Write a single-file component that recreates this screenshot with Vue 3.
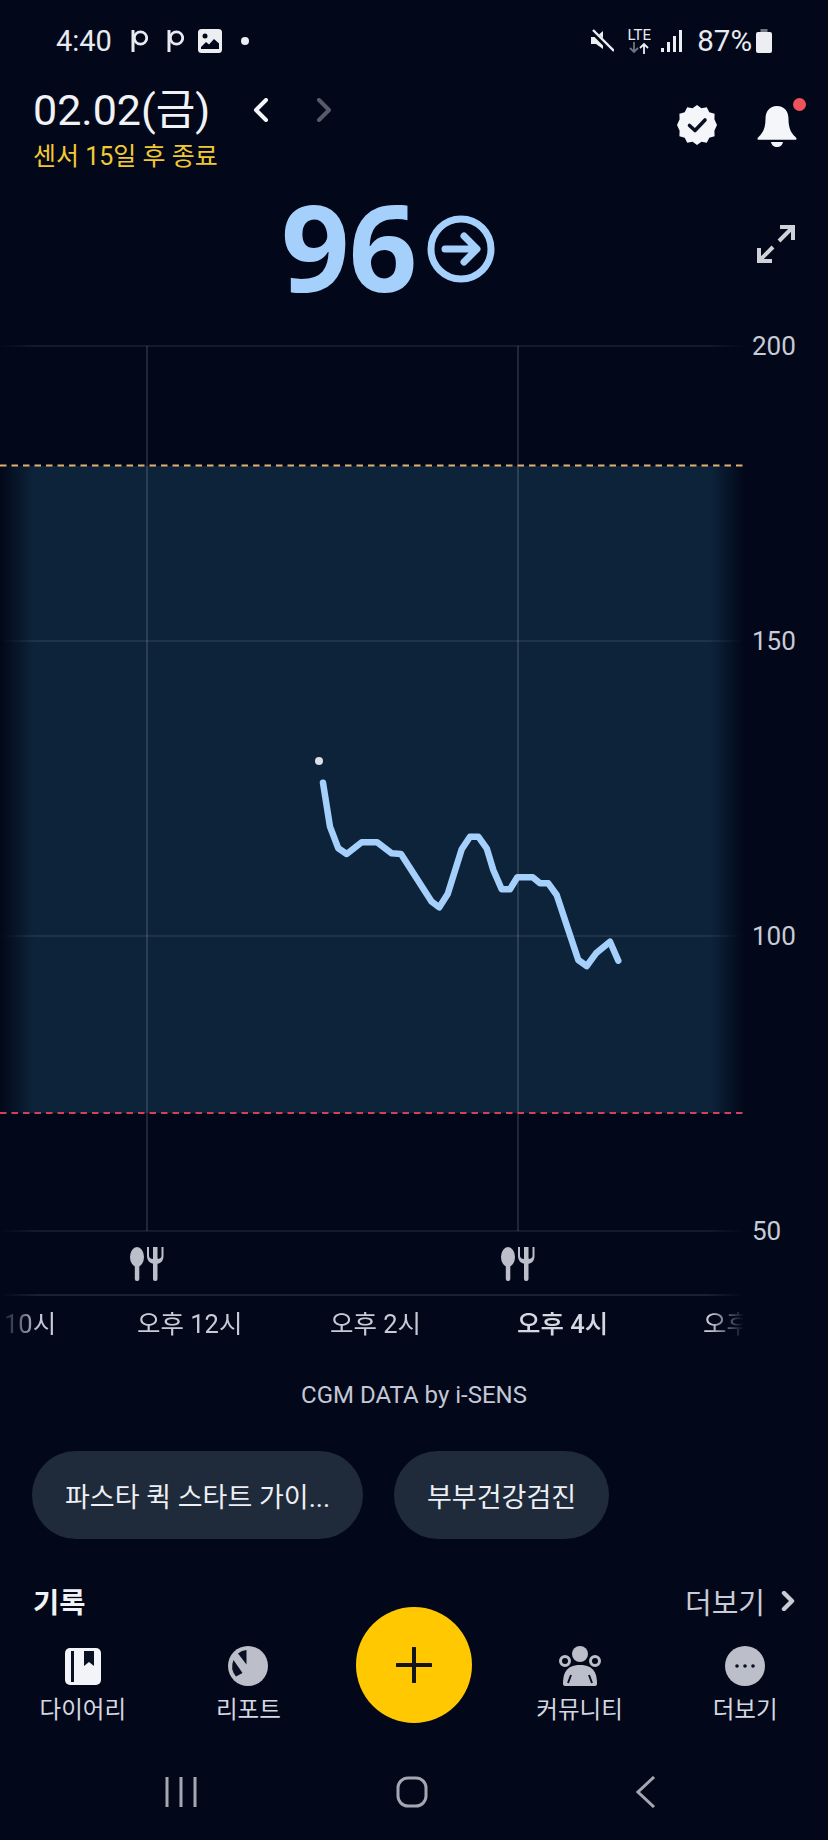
<script setup>
import { computed } from 'vue'

const gridLevels = [
  { label: '200', y: 346 },
  { label: '150', y: 641 },
  { label: '100', y: 936 },
  { label: '50', y: 1231 }
]

const hours = [
  { text: '10시', x: 4, cls: 'hour-dim' },
  { text: '오후 12시', x: 137, cls: '' },
  { text: '오후 2시', x: 330, cls: '' },
  { text: '오후 4시', x: 517, cls: 'hour-now' },
  { text: '오후', x: 703, cls: '' }
]

// traced from a 3x crop, so convert back afterwards
const rawPoints = [
  [99, 158], [120, 290], [145, 355], [170, 372], [215, 337], [262, 337], [305, 370], [333, 372],
  [425, 515], [448, 532], [473, 492], [515, 358], [540, 320], [565, 320], [590, 355], [610, 420],
  [635, 478], [660, 478], [682, 442], [728, 442], [750, 460], [775, 460], [800, 495], [835, 600],
  [865, 690], [890, 708], [918, 670], [960, 635], [985, 692]
]

const linePoints = computed(() =>
  rawPoints.map(([x, y]) => `${(290 + x / 3).toFixed(1)},${(730 + y / 3).toFixed(1)}`).join(' ')
)

const navItems = [
  { key: 'diary', label: '다이어리' },
  { key: 'report', label: '리포트' },
  { key: 'fab', label: '' },
  { key: 'community', label: '커뮤니티' },
  { key: 'more', label: '더보기' }
]
</script>

<template>
  <div class="page">
    <div class="status">
      <div class="status-left">
        <span class="clock">4:40</span>
        <svg class="ic-p" viewBox="0 0 18 24"><path d="M3 1v22" stroke="#e8eaf0" stroke-width="3" /><circle cx="10.500" cy="9" r="6.200" fill="none" stroke="#e8eaf0" stroke-width="2.800" /></svg>
        <svg class="ic-p" viewBox="0 0 18 24"><path d="M3 1v22" stroke="#e8eaf0" stroke-width="3" /><circle cx="10.500" cy="9" r="6.200" fill="none" stroke="#e8eaf0" stroke-width="2.800" /></svg>
        <svg class="ic-img" viewBox="0 0 24 24">
          <rect width="24" height="24" rx="3.500" fill="#eceef2" />
          <circle cx="7" cy="7" r="2.500" fill="#020819" />
          <path d="M3 20v-2l5-5 3 2.500 5-5.500 5 4.500V20z" fill="#020819" />
        </svg>
        <span class="dot"></span>
      </div>
      <div class="status-right">
        <svg class="ic-mute" viewBox="0 0 24 24">
          <path d="M1 8h5l7-6v18l-7-5H1z" fill="#eceef2" />
          <path d="M2 2l21 21" stroke="#020819" stroke-width="5" />
          <path d="M3 1l21 21" stroke="#eceef2" stroke-width="2.400" />
        </svg>
        <span class="lte">
          <span class="lte-text">LTE</span>
          <svg class="lte-arrows" viewBox="0 0 24 12">
            <path d="M7 0v10M3 6l4 4 4-4" fill="none" stroke="#6f7480" stroke-width="1.800" />
            <path d="M17 12V2M13 6l4-4 4 4" fill="none" stroke="#eceef2" stroke-width="1.800" />
          </svg>
        </span>
        <svg class="ic-signal" viewBox="0 0 22 24">
          <rect x="0" y="19" width="3" height="4" fill="#eceef2" />
          <rect x="6" y="13" width="3" height="10" fill="#eceef2" />
          <rect x="12" y="7" width="3" height="16" fill="#eceef2" />
          <rect x="18" y="1" width="3" height="22" fill="#eceef2" />
        </svg>
        <span class="battery-text">87%</span>
        <svg class="ic-battery" viewBox="0 0 16 24">
          <rect x="4.500" y="0" width="7" height="4" fill="#70747e" />
          <rect y="3" width="16" height="21" rx="2" fill="#eceef2" />
        </svg>
      </div>
    </div>

    <div class="head">
      <div class="head-left">
        <div class="date-row">
          <span class="date">02.02(금)</span>
          <svg class="chev chev-prev" viewBox="0 0 16 24"><path d="M13 2L3 12l10 10" fill="none" stroke="#f4f5f8" stroke-width="4" stroke-linecap="round" stroke-linejoin="round" /></svg>
          <svg class="chev chev-next" viewBox="0 0 16 24"><path d="M3 2l10 10L3 22" fill="none" stroke="#565b67" stroke-width="4" stroke-linecap="round" stroke-linejoin="round" /></svg>
        </div>
        <div class="sensor">센서 15일 후 종료</div>
      </div>
      <div class="head-right">
        <svg class="ic-badge" viewBox="0 0 40 40">
          <path d="M20 0l4.400 3.300 5.400-1 2.500 4.900 5.300 1.500-.2 5.500L40 20l-2.600 5.800.2 5.500-5.300 1.500-2.500 4.900-5.400-1L20 40l-4.400-3.300-5.400 1-2.500-4.900-5.300-1.500.2-5.500L0 20l2.600-5.800-.2-5.500 5.300-1.500 2.500-4.900 5.400 1z" fill="#f5f6f9" />
          <path d="M12.500 20.500l5.500 5 10-10.500" fill="none" stroke="#0a1024" stroke-width="3.600" stroke-linecap="round" stroke-linejoin="round" />
        </svg>
        <div class="bell-wrap">
          <svg class="ic-bell" viewBox="0 0 42 42">
            <path d="M21 1c-7.500 0-11.500 5.500-11.500 13 0 9-2.500 14-7 18-1.500 1.300-1.500 2.800.5 2.800h36c2 0 2-1.500.5-2.800-4.500-4-7-9-7-18C32.500 6.500 28.500 1 21 1z" fill="#f5f6f9" />
            <path d="M15 37h12c-.5 3-3 5-6 5s-5.500-2-6-5z" fill="#f5f6f9" />
          </svg>
          <span class="bell-dot"></span>
        </div>
      </div>
    </div>

    <div class="reading">
      <span class="value">96</span>
      <svg class="ic-trend" viewBox="0 0 68 68">
        <circle cx="34" cy="34" r="30" fill="none" stroke="#a5d0fb" stroke-width="7" />
        <path d="M18 34h31M37 21l13 13-13 13" fill="none" stroke="#a5d0fb" stroke-width="7" stroke-linecap="round" stroke-linejoin="round" />
      </svg>
      <svg class="ic-expand" viewBox="0 0 38 38">
        <path d="M22 16L36 2M23 2h13v13M16 22L2 36M2 23v13h13" fill="none" stroke="#d0d2da" stroke-width="4" />
      </svg>
    </div>

    <div class="chart">
      <svg class="plot" viewBox="0 320 744 980">
        <defs>
          <linearGradient id="band" x1="0" x2="1" y1="0" y2="0">
            <stop offset="0" stop-color="#0d233a" stop-opacity="0" />
            <stop offset="0.045" stop-color="#0d233a" />
            <stop offset="0.955" stop-color="#0d233a" />
            <stop offset="1" stop-color="#0d233a" stop-opacity="0" />
          </linearGradient>
          <linearGradient id="gridfade" x1="0" x2="744" y1="0" y2="0" gradientUnits="userSpaceOnUse">
            <stop offset="0" stop-color="#fff" stop-opacity="0" />
            <stop offset="0.05" stop-color="#fff" stop-opacity="0.1" />
            <stop offset="0.95" stop-color="#fff" stop-opacity="0.1" />
            <stop offset="1" stop-color="#fff" stop-opacity="0" />
          </linearGradient>
        </defs>
        <rect x="0" y="466" width="744" height="647" fill="url(#band)" />
        <line v-for="g in gridLevels" :key="g.label" x1="0" x2="744" :y1="g.y" :y2="g.y" stroke="url(#gridfade)" stroke-width="1.500" />
        <line x1="0" x2="744" y1="1295" y2="1295" stroke="url(#gridfade)" stroke-width="2" />
        <line x1="147" x2="147" y1="346" y2="1231" stroke="#fff" stroke-opacity="0.17" stroke-width="1.500" />
        <line x1="518" x2="518" y1="346" y2="1231" stroke="#fff" stroke-opacity="0.17" stroke-width="1.500" />
        <line x1="0" x2="744" y1="465.500" y2="465.500" stroke="#e0b070" stroke-width="2" stroke-dasharray="6.500 5" />
        <line x1="0" x2="744" y1="1113" y2="1113" stroke="#d2405a" stroke-width="2" stroke-dasharray="6.500 5" />
        <circle cx="319" cy="761" r="4" fill="#dcdfe8" />
        <polyline :points="linePoints" fill="none" stroke="#a5d0fb" stroke-width="6.500" stroke-linecap="round" stroke-linejoin="round" />
        <g v-for="mx in [130, 501]" :key="mx" :transform="`translate(${mx} 1247)`" fill="#bcbfc9">
          <ellipse cx="7" cy="10" rx="7" ry="10" />
          <rect x="4.800" y="14" width="4.500" height="20" rx="2" />
          <rect x="23" y="10" width="4.500" height="24" rx="2" />
          <path d="M17 0h2v9c0 2 2 3 4 3V0h4.500v12c2 0 4-1 4-3V0h2v9c0 5-3 8-8 8s-8.500-3-8.500-8z" />
        </g>
      </svg>
      <span v-for="g in gridLevels" :key="g.label" class="y-label" :style="{ top: g.y - 320 - 16 + 'px' }">{{ g.label }}</span>
    </div>

    <div class="hours">
      <span v-for="h in hours" :key="h.x" class="hour" :class="h.cls" :style="{ left: h.x + 'px' }">{{ h.text }}</span>
    </div>

    <div class="cgm">CGM DATA by i-SENS</div>

    <div class="chips">
      <div class="chip chip-wide">파스타 퀵 스타트 가이...</div>
      <div class="chip">부부건강검진</div>
    </div>

    <div class="record">
      <span class="record-title">기록</span>
      <span class="record-more">
        더보기
        <svg class="more-chev" viewBox="0 0 14 20"><path d="M3 2l8 8-8 8" fill="none" stroke="#c9ccd6" stroke-width="4.400" stroke-linecap="round" stroke-linejoin="round" /></svg>
      </span>
    </div>

    <div class="nav">
      <div v-for="item in navItems" :key="item.key" class="nav-item">
        <button v-if="item.key === 'fab'" class="fab">
          <svg viewBox="0 0 36 36" class="ic-plus"><path d="M18 1v34M1 18h34" stroke="#14151a" stroke-width="4" stroke-linecap="round" /></svg>
        </button>
        <template v-else>
          <svg class="nav-icon" viewBox="0 0 42 42">
            <template v-if="item.key === 'diary'">
              <rect x="3" y="3" width="36" height="37" rx="5" fill="#f3f4f8" />
              <rect x="9" y="6" width="3" height="31" fill="#0a1024" />
              <path d="M22 6h10v15l-5-4-5 4z" fill="#0a1024" />
            </template>
            <template v-else-if="item.key === 'report'">
              <circle cx="21" cy="21" r="20" fill="#bcbfc9" />
              <path d="M11 8.500A16 16 0 0 1 19.500 5V19.500z" fill="#0a1024" />
              <path d="M6.500 15L15.500 28 9 31.500A16 16 0 0 1 6.500 15z" fill="#0a1024" />
            </template>
            <template v-else-if="item.key === 'community'">
              <circle cx="21" cy="9" r="8" fill="#bcbfc9" />
              <circle cx="6" cy="16" r="4.500" fill="none" stroke="#bcbfc9" stroke-width="3" />
              <circle cx="36" cy="16" r="4.500" fill="none" stroke="#bcbfc9" stroke-width="3" />
              <path d="M4 39c0-9 2-19 17-19s17 10 17 19c0 1-1 2-2 2H6c-1 0-2-1-2-2z" fill="#bcbfc9" />
              <path d="M9 38l3-8M33 38l-3-8" stroke="#0a1024" stroke-width="2" />
            </template>
            <template v-else>
              <circle cx="21" cy="21" r="20" fill="#bcbfc9" />
              <circle cx="13" cy="21" r="1.800" fill="#0a1024" />
              <circle cx="21" cy="21" r="1.800" fill="#0a1024" />
              <circle cx="29" cy="21" r="1.800" fill="#0a1024" />
            </template>
          </svg>
          <span class="nav-label">{{ item.label }}</span>
        </template>
      </div>
    </div>

    <div class="sysnav">
      <svg class="sys-recents" viewBox="0 0 32 32"><path d="M2 1v30M16 1v30M30 1v30" stroke="#a4a7b2" stroke-width="3" /></svg>
      <svg class="sys-home" viewBox="0 0 32 32"><rect x="2" y="2" width="28" height="28" rx="10" fill="none" stroke="#a4a7b2" stroke-width="3" /></svg>
      <svg class="sys-back" viewBox="0 0 20 32"><path d="M18 1L2 16l16 15" fill="none" stroke="#a4a7b2" stroke-width="3" /></svg>
    </div>
  </div>
</template>

<style>
html, body {
  margin: 0;
  background: #020819;
}
</style>

<style scoped>
.page {
  width: 828px;
  height: 1840px;
  overflow: hidden;
  display: flex;
  flex-direction: column;
  background: #020819;
  color: #f4f5f8;
  font-family: Roboto, "Noto Sans CJK KR", sans-serif;
}
.status {
  height: 82px;
  display: flex;
  justify-content: space-between;
  align-items: center;
  padding: 0 56px;
  box-sizing: border-box;
}
.status-left,
.status-right {
  display: flex;
  align-items: center;
}
.clock {
  font-size: 29px;
  color: #e8eaf0;
  margin-right: 18px;
}
.ic-p {
  width: 18px;
  height: 24px;
  margin-right: 18px;
}
.ic-img {
  width: 24px;
  height: 24px;
  margin-left: -4px;
  margin-right: 19px;
}
.dot {
  width: 8px;
  height: 8px;
  border-radius: 50%;
  background: #eceef2;
}
.ic-mute {
  width: 24px;
  height: 24px;
  margin-right: 12px;
}
.lte {
  display: flex;
  flex-direction: column;
  align-items: center;
  width: 26px;
  margin-right: 9px;
}
.lte-text {
  font-size: 15px;
  line-height: 14px;
  color: #e8eaf0;
}
.lte-arrows {
  width: 24px;
  height: 12px;
}
.ic-signal {
  width: 22px;
  height: 24px;
  margin-right: 14px;
}
.battery-text {
  font-size: 29.500px;
  color: #e8eaf0;
  margin-right: 4px;
}
.ic-battery {
  width: 16px;
  height: 24px;
}
.head {
  height: 96px;
  display: flex;
  justify-content: space-between;
  padding: 0 30px 0 33px;
}
.date-row {
  display: flex;
  align-items: center;
  height: 56px;
}
.date {
  font-size: 43px;
  line-height: 56px;
  color: #f0f2f6;
  width: 220px;
}
.chev {
  width: 16px;
  height: 24px;
}
.chev-next {
  margin-left: 47px;
}
.sensor {
  font-size: 25px;
  line-height: 38px;
  color: #f2c933;
}
.head-right {
  display: flex;
  align-items: flex-start;
  padding-top: 23px;
}
.ic-badge {
  width: 40px;
  height: 40px;
}
.bell-wrap {
  position: relative;
  margin-left: 39px;
  width: 42px;
  height: 42px;
}
.ic-bell {
  width: 42px;
  height: 42px;
  display: block;
}
.bell-dot {
  position: absolute;
  top: -7px;
  right: -8px;
  width: 13px;
  height: 13px;
  border-radius: 50%;
  background: #f0525c;
}
.reading {
  position: relative;
  height: 142px;
  display: flex;
  align-items: center;
  padding-left: 281px;
}
.value {
  font-family: "Noto Sans", sans-serif;
  font-weight: 700;
  font-size: 120px;
  line-height: 136px;
  height: 136px;
  margin-top: -6px;
  letter-spacing: -1px;
  color: #a5d0fb;
  width: 146px;
}
.ic-trend {
  width: 68px;
  height: 68px;
}
.ic-expand {
  position: absolute;
  left: 757px;
  top: 47px;
  width: 38px;
  height: 38px;
}
.chart {
  position: relative;
  height: 980px;
}
.plot {
  display: block;
  width: 744px;
  height: 980px;
}
.y-label {
  position: absolute;
  left: 752px;
  font-size: 26px;
  line-height: 32px;
  color: #c8cbd6;
}
.hours {
  position: relative;
  height: 60px;
  width: 744px;
  overflow: hidden;
  -webkit-mask-image: linear-gradient(to right, transparent 0, #000 40px, #000 710px, transparent 744px);
  mask-image: linear-gradient(to right, transparent 0, #000 40px, #000 710px, transparent 744px);
}
.hour {
  position: absolute;
  top: 8px;
  font-size: 25.500px;
  line-height: 32px;
  color: #c8cbd6;
  white-space: nowrap;
}
.hour-now {
  font-weight: 500;
  color: #d5d8e0;
}
.cgm {
  height: 50px;
  margin-top: 20px;
  text-align: center;
  font-size: 24px;
  line-height: 30px;
  color: #c3c7d6;
}
.chips {
  display: flex;
  gap: 31px;
  padding: 21px 32px 0;
}
.chip {
  height: 88px;
  display: flex;
  align-items: center;
  padding: 0 33px;
  border-radius: 44px;
  background: #1f2a3a;
  font-size: 27px;
  color: #edeff4;
  white-space: nowrap;
}
.record {
  height: 83px;
  display: flex;
  justify-content: space-between;
  align-items: center;
  padding: 40px 33px 0;
  box-sizing: border-box;
}
.record-title {
  font-size: 28.500px;
  font-weight: 700;
  color: #f0f2f6;
}
.record-more {
  display: flex;
  align-items: center;
  gap: 16px;
  font-size: 29px;
  color: #c9ccd6;
}
.more-chev {
  width: 14px;
  height: 20px;
}
.nav {
  height: 115px;
  display: grid;
  grid-template-columns: repeat(5, 1fr);
}
.nav-item {
  display: flex;
  flex-direction: column;
  align-items: center;
}
.nav-icon {
  width: 42px;
  height: 42px;
  margin-top: 23px;
}
.nav-label {
  font-size: 23.500px;
  line-height: 32px;
  margin-top: 7px;
  color: #d5d8e0;
}
.fab {
  width: 116px;
  height: 116px;
  margin-top: -15px;
  flex: none;
  border: 0;
  padding: 0;
  border-radius: 50%;
  background: #ffc800;
  display: flex;
  align-items: center;
  justify-content: center;
}
.ic-plus {
  width: 36px;
  height: 36px;
}
.sysnav {
  flex: 1;
  display: flex;
  align-items: center;
  padding: 6px 0 0 165px;
}
.sys-recents {
  width: 32px;
  height: 32px;
}
.sys-home {
  width: 32px;
  height: 32px;
  margin-left: 199px;
}
.sys-back {
  width: 20px;
  height: 32px;
  margin-left: 208px;
}
</style>
